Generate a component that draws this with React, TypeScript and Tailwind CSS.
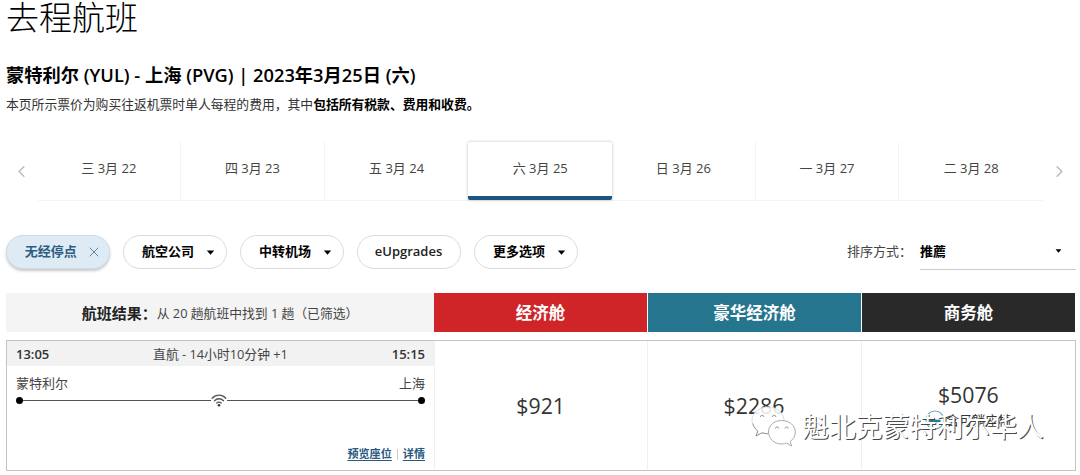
import { ChevronLeft, ChevronRight, X } from "lucide-react";

const DAYS = ["三 3月 22", "四 3月 23", "五 3月 24", "六 3月 25", "日 3月 26", "一 3月 27", "二 3月 28"];
const SELECTED_DAY = 3;

const FILTERS = [
  { label: "航空公司", menu: true },
  { label: "中转机场", menu: true },
  { label: "eUpgrades", menu: false },
  { label: "更多选项", menu: true },
];

const CABINS = [
  { name: "经济舱", color: "bg-[#cf2529]" },
  { name: "豪华经济舱", color: "bg-[#24758d]" },
  { name: "商务舱", color: "bg-[#292929]" },
];

function Caret({ className }: { className: string }) {
  return (
    <svg className={className} viewBox="0 0 8 5" aria-hidden>
      <path d="M0.3 0.4h7.4L4 4.7z" fill="currentColor" />
    </svg>
  );
}

function DateStrip() {
  return (
    <nav className="mt-[28px] flex h-[59px] items-stretch" aria-label="日期">
      <button type="button" className="flex w-[31.500px] items-center justify-center text-[#bcbcbc]" aria-label="前一天">
        <ChevronLeft className="h-[19px] w-[19px]" strokeWidth={2} />
      </button>
      <div className="grid flex-1 grid-cols-7 border-b border-[#f3f3f3] text-[#444]">
        {DAYS.map((day, i) =>
          i === SELECTED_DAY ? (
            <button
              key={day}
              type="button"
              className="rounded-[2px] border-b-4 border-[#1b5480] bg-white text-[13px] shadow-[0_0_3px_rgba(0,0,0,0.28)]"
            >
              {day}
            </button>
          ) : (
            <button
              key={day}
              type="button"
              className={`pb-[5px] text-[13px] ${i === DAYS.length - 1 || i === SELECTED_DAY - 1 ? "" : "border-r border-[#f3f3f3]"}`}
            >
              {day}
            </button>
          ),
        )}
      </div>
      <button type="button" className="flex w-[33px] items-center justify-center text-[#bcbcbc]" aria-label="后一天">
        <ChevronRight className="h-[19px] w-[19px]" strokeWidth={2} />
      </button>
    </nav>
  );
}

function FilterBar() {
  return (
    <div className="mt-[34px] flex h-9 items-start gap-[13px] text-black">
      <button
        type="button"
        className="flex h-[34px] w-[103.500px] items-center justify-center gap-[9px] rounded-full border border-[#cddde8] bg-[#deebf5] pl-[7px] text-[13px] font-bold text-[#2d5d83] shadow-[0_2px_3px_rgba(0,0,0,0.22)]"
      >
        无经停点
        <X className="-mr-1 h-[16px] w-[16px] text-[#64859f]" strokeWidth={1.5} />
      </button>
      {FILTERS.map((f) => (
        <button
          key={f.label}
          type="button"
          className="flex h-[34px] w-[104px] items-center justify-center gap-3 rounded-full border border-[#dcdcdc] text-[13px] font-bold"
        >
          {f.menu ? f.label : <span className="font-semibold text-[#222]">{f.label}</span>}
          {f.menu && <Caret className="-mr-2 h-[5px] w-[9px]" />}
        </button>
      ))}
      <div className="ml-auto flex h-[35px]">
        <span className="mr-[8px] pt-[6px] text-[13px] leading-5 text-[#444]">排序方式：</span>
        <div className="flex w-[156px] items-start justify-between border-b border-[#ccc] pt-[6px] pr-[14px] text-[13px] leading-5 font-bold">
          推薦
          <Caret className="mt-[8px] h-[4px] w-[7px]" />
        </div>
      </div>
    </div>
  );
}

function WifiIcon() {
  return (
    <svg className="h-[13px] w-[16px]" viewBox="0 0 16 13" fill="none" stroke="#555" strokeWidth="1.3" strokeLinecap="round" aria-hidden>
      <path d="M1.2 4.2C5 .2 11 .2 14.8 4.2" />
      <path d="M3.5 6.7c2.5-2.6 6.5-2.6 9 0" />
      <path d="M5.8 9c1.2-1.3 3.2-1.3 4.4 0" />
      <circle cx="8" cy="11.2" r="1.3" fill="#333" stroke="none" />
    </svg>
  );
}

function FlightDetails() {
  return (
    <div className="flex flex-col border-r border-[#f0f0f0]">
      <div className="flex h-[25px] items-center justify-between bg-[#f2f2f2] px-[9px] pt-[2px] text-[13px]">
        <span className="font-semibold">13:05</span>
        <span className="text-[12.800px] text-[#444]">直航 - 14小时10分钟 +1</span>
        <span className="font-semibold">15:15</span>
      </div>
      <div className="flex justify-between px-[9px] pt-[8px] text-[13px] leading-[19px] text-[#444]">
        <span>蒙特利尔</span>
        <span>上海</span>
      </div>
      <div className="mx-[9px] mt-px flex h-[13px] items-center">
        <span className="h-[7px] w-[7px] rounded-full bg-black" />
        <span className="h-px w-[188px] bg-[#555]" />
        <WifiIcon />
        <span className="h-px flex-1 bg-[#555]" />
        <span className="h-[7px] w-[7px] rounded-full bg-black" />
      </div>
      <div className="mt-auto flex items-center justify-end gap-[5px] pr-[9px] pb-[6px] text-[11.100px] leading-5 font-bold text-[#28597f]">
        <a className="underline underline-offset-2">预览座位</a>
        <span className="h-[11px] w-px bg-[#ccc]" />
        <a className="underline underline-offset-2">详情</a>
      </div>
    </div>
  );
}

function Results() {
  return (
    <section>
      <div className="mt-[22px] grid h-[39px] grid-cols-[428px_repeat(3,1fr)]">
        <div className="flex items-center justify-center bg-[#f4f4f4] pt-[2px] text-[#444]">
          <b className="text-[15px] text-[#222]">航班结果：</b>
          <span className="text-[12.800px]">从 20 趟航班中找到 1 趟（已筛选）</span>
        </div>
        {CABINS.map((c) => (
          <div key={c.name} className={`mr-px flex items-center justify-center pt-px text-[16.500px] font-bold text-white ${c.color}`}>
            {c.name}
          </div>
        ))}
      </div>
      <div className="mt-[8px] grid h-[131px] grid-cols-[428px_repeat(3,1fr)] border border-[#c4c4c4] text-[#333]">
        <FlightDetails />
        <div className="flex items-center justify-center border-r border-[#f0f0f0] pt-px pr-px text-[21.300px]">$921</div>
        <div className="flex items-center justify-center border-r border-[#f0f0f0] pt-px pr-px text-[21.300px]">$2286</div>
        <div className="flex flex-col items-center pt-[39px]">
          <span className="text-[21.300px] leading-[30px]">$5076</span>
          <span className="flex items-center gap-px text-[13px] leading-[18px]">
            <svg className="h-[20px] w-[20px]" viewBox="0 0 20 20" fill="none" aria-hidden>
              <circle cx="10" cy="10" r="9" stroke="#5aa7bd" strokeWidth="1.2" />
              <path d="M4.5 11h11" stroke="#247a94" strokeWidth="2.6" />
            </svg>
            含可躺座椅
          </span>
        </div>
      </div>
    </section>
  );
}

function Watermark() {
  return (
    <div className="pointer-events-none absolute top-[403px] left-[751px] flex items-center whitespace-nowrap">
      <svg className="h-[42px] w-[46px]" viewBox="0 0 46 42" aria-hidden>
        <g fill="#fff" fillOpacity="0.88" stroke="#999" strokeWidth="1">
          <path d="M17 2C7.500 2 1 8 1 15.500c0 4.500 2.300 8 5.800 10.400L5 31l6-3.200c2 .6 4 .9 6 .9 9 0 16-5.800 16-13.200S26 2 17 2z" stroke="#ddd" />
          <path d="M1.800 18.500c.8 3 2.500 5.500 5 7.400L5 31l6-3.200c2 .6 4 .9 6 .9" fill="none" />
          <path d="M30.500 15.500C23 15.500 17.500 20.500 17.500 27s5.500 12 13 12c2 0 3.700-.3 5.200-.9L40.500 41l-1.200-4.600c3-2.200 5-5.500 5-9.400 0-6.500-6-11.500-13.800-11.500z" stroke="#aaa" />
          <path d="M9.500 12a1.700 1.700 0 0 1 3.400 0M21.500 12a1.700 1.700 0 0 1 3.400 0M24.500 23.500a1.600 1.600 0 0 1 3.200 0M34 23.500a1.600 1.600 0 0 1 3.200 0" fill="none" />
        </g>
      </svg>
      <span className="ml-[5px] pt-[3px] text-[26.900px] leading-[42px] font-normal text-white [text-shadow:1px_1px_0.5px_rgba(60,60,60,0.95)]">
        魁北克蒙特利尔华人
      </span>
    </div>
  );
}

export default function App() {
  return (
    <main className="relative h-[475px] w-[1080px] bg-white pr-[4px] pl-[6px] font-['Open_Sans','Noto_Sans_CJK_SC',sans-serif] text-[#333]">
      <h1 className="h-[36px] text-[33px] leading-[36px] font-light text-black">去程航班</h1>
      <h2 className="mt-[26px] h-[26px] text-[18.250px] leading-[26px] font-bold whitespace-nowrap text-black">
        蒙特利尔<span className="font-semibold"> (YUL) - </span>上海<span className="font-semibold"> (PVG) | 2023</span>年
        <span className="font-semibold">3</span>月<span className="font-semibold">25</span>日
        <span className="font-semibold"> (</span>六<span className="font-semibold">)</span>
      </h2>
      <p className="mt-[6px] h-[20px] text-[12.800px] leading-[20px] text-[#333]">
        本页所示票价为购买往返机票时单人每程的费用，其中<b className="text-black">包括所有税款、费用和收费。</b>
      </p>
      <DateStrip />
      <FilterBar />
      <Results />
      <Watermark />
    </main>
  );
}
